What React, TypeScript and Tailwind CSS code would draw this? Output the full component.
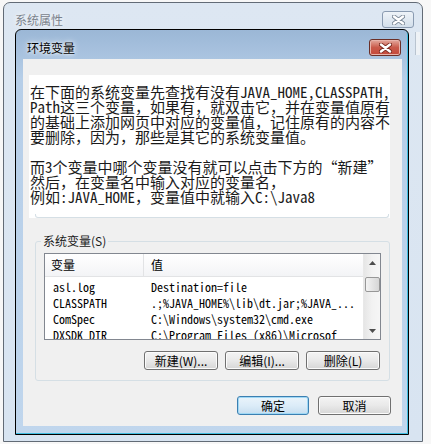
import React from "react";

const BODY_FONT = "font-['Noto_Sans_Mono_CJK_SC','Noto_Sans_CJK_SC',monospace]";
const UI_FONT = "font-['Noto_Sans_CJK_SC','Noto_Sans',sans-serif]";

const envRows = [
  { name: "asl.log", value: "Destination=file" },
  { name: "CLASSPATH", value: ".;%JAVA_HOME%\\lib\\dt.jar;%JAVA_..." },
  { name: "ComSpec", value: "C:\\Windows\\system32\\cmd.exe" },
  { name: "DXSDK_DIR", value: "C:\\Program Files (x86)\\Microsof" },
];

function CloseGlyph({ color, outline }: { color: string; outline: string }) {
  return (
    <svg width="13" height="10" viewBox="0 0 13 10">
      <path d="M2 1.5 L11 8.5 M11 1.5 L2 8.5" stroke={outline} strokeWidth="4.2" strokeLinecap="round" />
      <path d="M2 1.5 L11 8.5 M11 1.5 L2 8.5" stroke={color} strokeWidth="2.4" strokeLinecap="round" />
    </svg>
  );
}

function Arrow({ up }: { up?: boolean }) {
  return (
    <svg width="7" height="4" viewBox="0 0 7 4">
      <path d={up ? "M0 4 L3.5 0 L7 4 Z" : "M0 0 L3.5 4 L7 0 Z"} fill="#4d4d4d" />
    </svg>
  );
}

function WinButton({ label, w, primary }: { label: string; w: string; primary?: boolean }) {
  return (
    <button
      className={`${w} h-[19px] rounded-[3px] border text-[12px] leading-[17px] text-black ${UI_FONT} ${
        primary
          ? "border-[#3c7fb1] bg-gradient-to-b from-[#eaf4fb] via-[#dcecf8] to-[#c7def0] shadow-[inset_0_0_0_1px_#9fd8f5]"
          : "border-[#707070] bg-gradient-to-b from-[#f4f4f4] via-[#e9e9e9] to-[#d6d6d6] shadow-[inset_0_0_0_1px_#fbfbfb]"
      }`}
    >
      {label}
    </button>
  );
}

export default function App() {
  return (
    <div className={`relative w-[431px] h-[444px] overflow-hidden bg-[#f7f7f7] ${UI_FONT}`}>
      {/* 系统属性 - inactive parent window */}
      <div className="absolute left-[3px] top-[2px] w-[420px] h-[440px] rounded-t-[7px] border border-[#626b76] bg-gradient-to-b from-[#dde7f2] to-[#d8e4f1]">
        <div className="h-[34px] pl-[11px] flex items-center text-[12px] text-[#7b838c] [text-shadow:0_0_6px_#fff]">
          系统属性
        </div>
        <div className="absolute right-[8px] top-[8px] w-[32px] h-[17px] rounded-[3px] border border-[#8a9bb1] bg-gradient-to-b from-[#eef3f8] to-[#d3dfeb] flex items-center justify-center">
          <CloseGlyph color="#ffffff" outline="#7d8a99" />
        </div>
        <div className="absolute right-[2px] top-[29px] w-[5px] h-[23px] bg-[#eef2f6] border-l border-[#b9c4d0]" />

        {/* 环境变量 - active dialog */}
        <div className="absolute left-[11px] top-[26px] w-[394px] h-[406px] rounded-t-[6px] border border-black bg-gradient-to-b from-[#9bb7d6] via-[#b6cee8] via-[12%] to-[#c0d6ed] shadow-[inset_-1px_-1px_0_#3fbde0]">
          <div className="relative h-[29px]">
            <div className="pl-[11px] pt-[11px] text-[12px] leading-[14px] text-black [text-shadow:0_0_7px_#fff,0_0_3px_#fff]">
              环境变量
            </div>
            <div className="absolute right-[7px] top-[9px] w-[32px] h-[17px] rounded-[3px] border border-[#6b2f27] bg-gradient-to-b from-[#e3a99f] via-[#c9594a] via-[50%] to-[#c4483a] shadow-[inset_0_0_0_1px_#e8b3aa] flex items-center justify-center">
              <CloseGlyph color="#ffffff" outline="#7a2a20" />
            </div>
          </div>

          {/* client area */}
          <div className="ml-[7px] w-[379px] h-[367px] bg-[#f0f0f0] flex flex-col">
            <div className="ml-[6px] mt-[16px] w-[361px] h-[143px] bg-white flex flex-col">
              <div className={`pt-[9px] pl-[1px] text-[15px] leading-[15px] text-[#1a1a1a] whitespace-nowrap ${BODY_FONT}`}>
                <div>在下面的系统变量先查找有没有JAVA_HOME,CLASSPATH,</div>
                <div>Path这三个变量，如果有，就双击它，并在变量值原有</div>
                <div>的基础上添加网页中对应的变量值，记住原有的内容不</div>
                <div>要删除，因为，那些是其它的系统变量值。</div>
                <div className="h-[15px]" />
                <div>而3个变量中哪个变量没有就可以点击下方的“新建”</div>
                <div>然后，在变量名中输入对应的变量名，</div>
                <div>例如:JAVA_HOME，变量值中就输入C:\Java8</div>
              </div>
              <div className="mt-auto ml-[6px] mr-[1px] h-[4px] rounded-b-[3px] border-x border-b border-[#d5dfe5]" />
            </div>

            {/* 系统变量 group */}
            <div className="relative ml-[12px] mt-[23px] w-[355px] h-[140px] rounded-[3px] border border-[#d5dfe5]">
              <div className="absolute left-[5px] -top-[9px] px-[2px] bg-[#f0f0f0] text-[12px] leading-[16px] text-[#1a1a1a]">
                系统变量(S)
              </div>

              <div className="ml-[8px] mt-[11px] w-[337px] h-[87px] border border-[#828790] bg-white flex overflow-hidden">
                <div className="w-[318px] flex flex-col">
                  <div className="h-[23px] flex border-b border-[#e2e3e5] bg-gradient-to-b from-white to-[#f3f4f6] text-[12px] leading-[22px] text-black">
                    <div className="w-[99px] pl-[6px] border-r border-[#e2e3e5]">变量</div>
                    <div className="pl-[7px]">值</div>
                  </div>
                  <div className={`pt-[2px] text-[12px] leading-[16px] text-black ${BODY_FONT}`}>
                    {envRows.map((row) => (
                      <div key={row.name} className="h-[16px] grid grid-cols-[106px_1fr] whitespace-nowrap overflow-hidden">
                        <div className="pl-[8px]">{row.name}</div>
                        <div className="overflow-hidden">{row.value}</div>
                      </div>
                    ))}
                  </div>
                </div>
                {/* vertical scrollbar */}
                <div className="w-[17px] flex flex-col items-center bg-gradient-to-r from-[#e6e6e6] via-[#f2f2f2] to-[#f6f6f6] border-l border-[#e8e8e8]">
                  <div className="h-[17px] flex items-center justify-center">
                    <Arrow up />
                  </div>
                  <div className="mt-[6px] w-[15px] h-[15px] rounded-[2px] border border-[#979797] bg-gradient-to-r from-[#f3f3f3] via-[#e4e4e4] to-[#d6d6d6]" />
                  <div className="mt-auto h-[17px] flex items-center justify-center">
                    <Arrow />
                  </div>
                </div>
              </div>

              <div className="mt-[11px] pr-[9px] flex justify-end gap-[7px]">
                <WinButton label="新建(W)..." w="w-[74px]" />
                <WinButton label="编辑(I)..." w="w-[74px]" />
                <WinButton label="删除(L)" w="w-[74px]" />
              </div>
            </div>

            <div className="mt-[15px] pr-[11px] flex justify-end gap-[9px]">
              <WinButton label="确定" w="w-[72px]" primary />
              <WinButton label="取消" w="w-[73px]" />
            </div>
          </div>
        </div>
      </div>
    </div>
  );
}
